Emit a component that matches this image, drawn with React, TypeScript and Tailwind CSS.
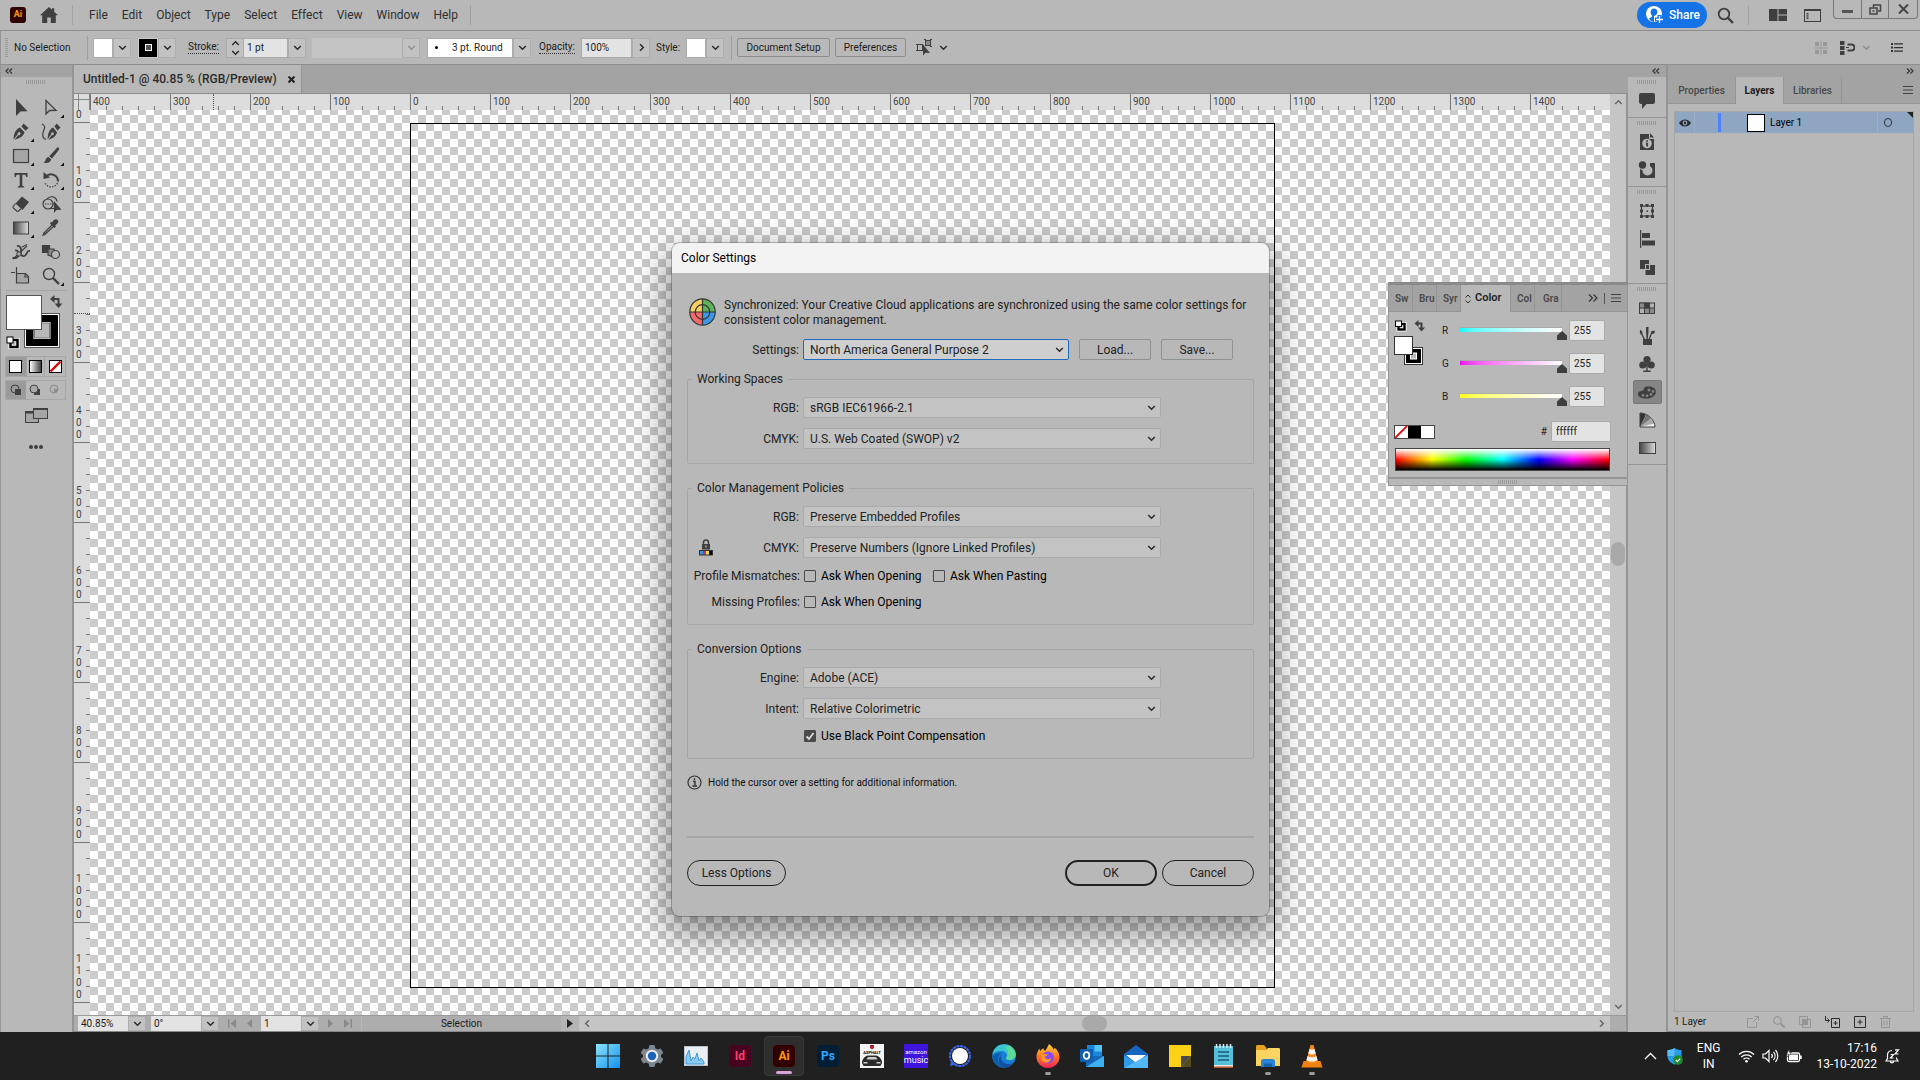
import React from "react";

type Kids = { children?: React.ReactNode };

const INK = "#3f3f3f";

function Chevron({ color = "#2b2b2b", turn = "" }: { color?: string; turn?: string }) {
  return (
    <svg width="9" height="9" viewBox="0 0 9 9" className={turn} aria-hidden="true">
      <path d="M1.2 3 4.5 6.3 7.8 3" fill="none" stroke={color} strokeWidth="1.5" />
    </svg>
  );
}

function Grip({ className = "" }: { className?: string }) {
  return (
    <div
      className={`h-1 w-5 bg-[repeating-linear-gradient(90deg,#999_0_1px,transparent_1px_2px)] ${className}`}
    />
  );
}

/* ---------- Menu bar ---------- */

const menus = ["File", "Edit", "Object", "Type", "Select", "Effect", "View", "Window", "Help"];

function MenuBar() {
  return (
    <header className="flex h-[31px] shrink-0 items-center border-b border-[#8d8d8d] pl-[10px]">
      <div className="flex h-4 w-4 items-center justify-center rounded-[3px] bg-[#330000] text-[9px] font-bold text-[#ff9a00]">
        Ai
      </div>
      <button aria-label="Home" className="ml-[14px]">
        <svg width="18" height="16" viewBox="0 0 18 16">
          <path d="M9 0 0 8.2h2.2V16h5v-5.5h3.6V16h5V8.2H18L14.2 4.7V1.3H12v1.4z" fill={INK} />
        </svg>
      </button>
      <div className="ml-[14px] h-5 w-px bg-[#a2a2a2]" />
      <nav className="ml-4 flex gap-[14px] text-[12px] text-[#2f2f2f]">
        {menus.map((m) => (
          <button key={m}>{m}</button>
        ))}
      </nav>
      <div className="ml-3 h-5 w-px bg-[#a2a2a2]" />
      <div className="ml-auto flex h-full items-center">
        <button className="flex h-[26px] w-[70px] items-center gap-1 rounded-full bg-[#1473e6] pl-2 text-[12px] font-medium text-white">
          <svg width="20" height="20" viewBox="0 0 20 20">
            <circle cx="9" cy="9" r="8" fill="#fff" />
            <path d="M9 3.6c-2.1 0-3.4 1.5-3.4 3.6 0 1.5.6 2.7 1.4 3.4v1.3c-1.3.5-2.7 1-3.2 1.9A7.6 7.6 0 0 0 9 17v-6c.8-.1 3.4-1.4 3.4-3.8S11.100 3.600 9 3.600z" fill="#1473e6" />
            <path d="M14.500 10v9M10 14.500h9" stroke="#1473e6" strokeWidth="4" />
            <path d="M14.500 11v7M11 14.500h7" stroke="#fff" strokeWidth="1.300" />
          </svg>
          Share
        </button>
        <button aria-label="Search" className="ml-[10px]">
          <svg width="17" height="17" viewBox="0 0 17 17" fill="none" stroke={INK}>
            <circle cx="7" cy="7" r="5.300" strokeWidth="1.800" />
            <path d="m11 11 5 5" strokeWidth="2.400" />
          </svg>
        </button>
        <div className="ml-[14px] h-5 w-px bg-[#a2a2a2]" />
        <button aria-label="Arrange documents" className="ml-5">
          <svg width="18" height="12" viewBox="0 0 18 12" fill={INK}>
            <path d="M0 0h8.500v12H0zM9.500 0H18v5.500H9.500zM9.500 6.500H18V12H9.500z" />
          </svg>
        </button>
        <button aria-label="Workspace" className="ml-[17px]">
          <svg width="17" height="13" viewBox="0 0 17 13" fill="none" stroke={INK}>
            <rect x=".5" y=".5" width="16" height="12" />
            <path d="M.5 1h16" strokeWidth="2" />
            <path d="M3.500 4v6" strokeWidth="2" strokeDasharray="1.500 .7" />
          </svg>
        </button>
        <div className="mr-[2px] ml-3 flex h-[19px] self-start rounded-b-[4px] border border-t-0 border-[#777]">
          <button aria-label="Minimize" className="flex w-7 items-center justify-center border-r border-[#777]">
            <span className="mt-[5px] h-[3px] w-[11px] bg-[#555]" />
          </button>
          <button aria-label="Restore" className="flex w-[27px] items-center justify-center border-r border-[#777]">
            <svg width="13" height="11" viewBox="0 0 13 11" fill="none" stroke="#444" strokeWidth="1.500">
              <path d="M4.500 3.500V1h7v6H9" />
              <rect x="1" y="4" width="7" height="6" />
              <path d="M3.500 7h2" />
            </svg>
          </button>
          <button aria-label="Close" className="flex w-7 items-center justify-center">
            <svg width="11" height="10" viewBox="0 0 11 10" stroke="#444" strokeWidth="2">
              <path d="m1 .5 9 9M10 .5l-9 9" />
            </svg>
          </button>
        </div>
      </div>
    </header>
  );
}

/* ---------- Control bar ---------- */

function DropButton({ label, dim = false, turn = "" }: { label: string; dim?: boolean; turn?: string }) {
  return (
    <button
      aria-label={label}
      className="flex h-full w-[18px] shrink-0 items-center justify-center border border-[#aeaeae] bg-[#c2c2c2]"
    >
      <Chevron color={dim ? "#8e8e8e" : "#2b2b2b"} turn={turn} />
    </button>
  );
}

function ControlBar() {
  return (
    <div className="flex h-[34px] shrink-0 items-center border-b border-[#8d8d8d] border-l border-l-[#949494] pl-1 text-[10px] text-[#1c1c1c]">
      <div className="h-5 w-[3px] bg-[repeating-linear-gradient(#999_0_1px,transparent_1px_2px)]" />
      <span className="ml-[6px] w-[73px]">No Selection</span>
      <div className="h-6 w-px bg-[#a0a0a0]" />
      <div className="ml-[5px] flex h-5">
        <button aria-label="Fill" className="w-5 border border-[#aaa] bg-white" />
        <DropButton label="Fill options" />
      </div>
      <div className="ml-[7px] flex h-5">
        <button aria-label="Stroke colour" className="flex w-5 items-center justify-center border border-[#ccc] bg-black">
          <span className="h-[7px] w-[7px] border border-white bg-[#555]" />
        </button>
        <DropButton label="Stroke colour options" />
      </div>
      <label htmlFor="stroke" className="ml-3 flex w-[38px]">
        <span className="border-b border-dotted border-[#333] leading-3">Stroke:</span>
      </label>
      <div className="flex h-5">
        <button aria-label="Step stroke weight" className="flex w-[18px] flex-col items-center justify-center border border-[#aaa] bg-[#c2c2c2]">
          <Chevron turn="rotate-180" />
          <Chevron />
        </button>
        <input id="stroke" defaultValue="1 pt" className="w-11 border border-l-0 border-[#aaa] bg-[#e3e3e3] px-[3px]" />
        <DropButton label="Stroke weights" />
      </div>
      <div className="ml-[6px] flex h-5">
        <div className="w-[90px] bg-[#c4c4c4]" />
        <DropButton label="Variable width profile" dim />
      </div>
      <div className="ml-[7px] flex h-5">
        <button className="flex w-[86px] items-center border border-[#aaa] bg-white pl-[7px] whitespace-nowrap">
          <span className="h-[3px] w-[3px] rounded-full bg-black" />
          <span className="ml-[14px]">3 pt. Round</span>
        </button>
        <DropButton label="Brush definition" />
      </div>
      <label htmlFor="opacity" className="ml-2 flex w-[42px]">
        <span className="border-b border-dotted border-[#333] leading-3">Opacity:</span>
      </label>
      <div className="flex h-5">
        <input id="opacity" defaultValue="100%" className="w-[51px] border border-[#aaa] bg-[#e3e3e3] px-[3px]" />
        <DropButton label="Opacity slider" turn="-rotate-90" />
      </div>
      <span className="ml-[6px] w-[30px]">Style:</span>
      <div className="flex h-5">
        <button aria-label="Graphic style" className="w-5 border border-[#aaa] bg-white" />
        <DropButton label="Graphic styles" />
      </div>
      <div className="ml-[7px] h-6 w-px bg-[#a0a0a0]" />
      <button className="ml-[5px] h-[19px] w-[93px] rounded-[2px] border border-[#8d8d8d]">Document Setup</button>
      <button className="ml-[5px] h-[19px] w-[71px] rounded-[2px] border border-[#8d8d8d]">Preferences</button>
      <button aria-label="Select similar objects" className="ml-[10px] flex items-center gap-[6px]">
        <svg width="17" height="17" viewBox="0 0 17 17" fill="none" stroke={INK}>
          <rect x="1.500" y="5.500" width="5" height="6" />
          <rect x="9.500" y="1.500" width="5" height="5" fill="#8a8a8a" />
          <path d="M0 5.500h2M0 11.500h2M8 .5h2M14 .5h2M14 7.500h2" />
          <path d="M7 5.500v11l2.500-2.700 4.500.2z" fill={INK} stroke="none" />
        </svg>
        <Chevron />
      </button>
      <div className="mr-[17px] ml-auto flex items-center">
        <svg width="14" height="14" viewBox="0 0 14 14" fill="#999">
          <path d="M1 1h4v4H1zM9 1h4v4H9zM1 9h4v4H1zM9 9h4v4H9z" />
          <path d="M6.500 0h1v14h-1zM0 6.500h14v1H0z" />
        </svg>
        <svg width="15" height="14" viewBox="0 0 15 14" className="ml-3">
          <path d="M0 0h4.500v4H0zM0 5h4.500v4H0zM0 10h4.500v4H0z" fill={INK} />
          <path d="M7.500 3.500h4a2.700 2.700 0 0 1 0 6h-4" fill="none" stroke={INK} strokeWidth="2" />
          <path d="M6 6.500h3" stroke={INK} />
        </svg>
        <span className="ml-[7px] flex">
          <Chevron color="#8e8e8e" />
        </span>
        <button aria-label="Control menu" className="ml-5">
          <svg width="12" height="9" viewBox="0 0 12 9" fill="#333">
            <path d="M0 0h2v2H0zM0 3.500h2v2H0zM0 7h2v2H0zM3 .3h9v1.300H3zM3 3.900h9v1.300H3zM3 7.400h9v1.300H3z" />
          </svg>
        </button>
      </div>
    </div>
  );
}

/* ---------- Tools panel ---------- */

const tools: { name: string; more?: boolean; art: React.ReactNode }[] = [
  { name: "Selection", art: <path d="M5 1v17l4.500-4.500 7-.3z" fill={INK} /> },
  { name: "Direct selection", more: true, art: <path d="M5 2.500v13.500l3.500-3.500 6.500-.2z" fill="none" stroke={INK} strokeWidth="1.300" /> },
  {
    name: "Pen",
    more: true,
    art: (
      <g fill={INK}>
        <path d="M2.500 17.500C3 12 4 7.500 9 5.500l4.500 4.700C12 15 8 16.500 3.500 17.500l4-4.500a1.500 1.500 0 1 0-.8-.7z" />
        <path d="m10.500 4.500 2-3 5 4.500-3 2.700z" />
      </g>
    ),
  },
  {
    name: "Curvature",
    art: (
      <g>
        <path d="M6.500 17.500C7 12 8 7.500 12 5.500l4 4.700C15 14.500 11.500 16.500 7.500 17.500l3.500-4.500a1.400 1.400 0 1 0-.8-.7z" fill={INK} />
        <path d="m13.500 4.500 2-3 4 4-3 3z" fill={INK} />
        <path d="M1 2c4 2 2.500 4 1.500 7S.5 16 5 17.500" fill="none" stroke={INK} strokeWidth="1.200" />
      </g>
    ),
  },
  { name: "Rectangle", more: true, art: <rect x="2.500" y="3.500" width="15" height="13" fill="#a5a5a5" stroke={INK} strokeWidth="1.200" /> },
  {
    name: "Paintbrush",
    more: true,
    art: (
      <g fill={INK}>
        <path d="M17.500 1.500c1.300.8.6 2-.5 3.500l-6 7.500-2.800-2.300 6.500-7c1.100-1.200 1.900-2.200 2.800-1.700z" />
        <path d="M7.500 11l2.700 2.300c-.5 3-3.500 4.500-7.700 3.500 2.500-1 1.500-5 5-5.800z" />
      </g>
    ),
  },
  { name: "Type", more: true, art: <path d="M3.500 3h13v4h-1.300c-.2-1.700-.7-2.300-2.400-2.300h-1.500v10.500c0 .9.400 1 1.900 1.200V17.500H6.800v-1.100c1.500-.2 1.900-.3 1.900-1.200V4.700H7.200C5.500 4.700 5 5.300 4.800 7H3.500z" fill={INK} /> },
  {
    name: "Rotate",
    more: true,
    art: (
      <g fill="none" stroke={INK}>
        <path d="M5 6.500a7 7 0 0 1 12 5" strokeWidth="2" />
        <path d="M16.500 13a7 7 0 0 1-12.500 0" strokeWidth="1.300" strokeDasharray="1.500 1.200" />
        <path d="M2.500 2v7l6.500-1.500z" fill={INK} stroke="none" />
      </g>
    ),
  },
  {
    name: "Eraser",
    more: true,
    art: (
      <g>
        <path d="M11 2.500 18 8l-6.500 8-7-6.500z" fill={INK} />
        <path d="m4.500 9.500-2.300 3c-.4.6-.3 1 .1 1.400L6 17.200c.5.4 1 .3 1.400 0l2.600-2.600" fill="none" stroke={INK} strokeWidth="1.200" />
      </g>
    ),
  },
  {
    name: "Shape builder",
    art: (
      <g fill="none" stroke={INK} strokeWidth="1.200">
        <circle cx="7" cy="10" r="5" />
        <path d="M6 5.200A5.500 5.500 0 0 1 16 7.500M8 14.500h5" />
        <path d="M4 10h9" strokeDasharray="1.500 1" />
        <path d="M13 7v12l2.500-3 5-.3z" fill={INK} stroke="none" />
      </g>
    ),
  },
  { name: "Gradient", more: true, art: <rect x="2.500" y="4" width="15" height="12" fill="url(#darkToLight)" stroke={INK} /> },
  {
    name: "Eyedropper",
    art: (
      <g>
        <path d="M11 4.500c2-3.500 4-4 5.500-2.700 1.500 1.400 1 3.400-2.300 5.700l.8 1-1.500 1.500L9 5.500 10 4z" fill={INK} />
        <path d="m11 7-7.500 7.500c-.9.900-.8 1.700-1.300 2.500.8-.3 1.500-.3 2.400-1.200L12.500 8.500" fill="none" stroke={INK} strokeWidth="1.300" />
      </g>
    ),
  },
  {
    name: "Puppet warp",
    art: (
      <g fill="none" stroke={INK}>
        <path d="M1.500 15.500c3 1.500 6 0 6-3.500S5.500 8 4 8.500M6 4c3.500-.5 4.500 3 4 6.500s3 5 5 2 1-4 4-3.500" strokeWidth="1.800" />
        <path d="M2 17 16 4M11 5l5-2.500" strokeWidth="1.200" />
        <circle cx="8" cy="12" r="2.200" fill="#a5a5a5" />
      </g>
    ),
  },
  {
    name: "Blend",
    art: (
      <g stroke={INK} strokeWidth="1.200">
        <path d="M1.500 3.500h7v7h-7z" fill={INK} />
        <path d="M7 7h6l1 5-3 2.500-4-1.500z" fill="#888" />
        <circle cx="14.500" cy="12.500" r="4" fill="#b8b8b8" />
      </g>
    ),
  },
  {
    name: "Artboard",
    art: (
      <g stroke={INK} strokeWidth="1.200">
        <path d="M5.500 7.500h9l3 3v6.500h-12z" fill="#a5a5a5" />
        <path d="M5.500 1v6M0 6.500h4M14 7.500v3.500h3.500" fill="none" />
      </g>
    ),
  },
  {
    name: "Zoom",
    more: true,
    art: (
      <g fill="none" stroke={INK}>
        <circle cx="8" cy="8" r="5.500" strokeWidth="1.400" />
        <path d="m12 12 6 6" strokeWidth="2.400" />
      </g>
    ),
  },
];

function ToolsPanel() {
  return (
    <aside className="flex w-[74px] shrink-0 flex-col border-r-2 border-l border-[#949494]">
      <div className="flex h-3 items-center bg-[#a3a3a3] pl-1">
        <svg width="8" height="6" viewBox="0 0 8 6" fill="none" stroke="#333" strokeWidth="1.200">
          <path d="M3.500.5 1 3l2.500 2.500M7 .5 4.500 3 7 5.500" />
        </svg>
      </div>
      <Grip className="mt-[3px] ml-[25px]" />
      <div className="mt-3 ml-[5px] grid w-[60px] grid-cols-2">
        {tools.map((t) => (
          <button key={t.name} aria-label={t.name} className="flex h-6 items-center pl-[5px]">
            <svg width="24" height="22" viewBox="0 -1 24 22">
              <defs>
                <linearGradient id="darkToLight">
                  <stop offset="0" stopColor="#444" />
                  <stop offset="1" stopColor="#dedede" />
                </linearGradient>
              </defs>
              {t.art}
              {t.more && <path d="M23 16.500V20h-3.500z" fill="#111" />}
            </svg>
          </button>
        ))}
      </div>
      <div className="mx-[5px] mt-[2px] h-px bg-[#a4a4a4]" />
      <svg width="62" height="56" viewBox="0 0 62 56" className="mt-[3px] ml-[5px]" aria-label="Fill and stroke">
        <rect x="18.500" y="19.500" width="35" height="34" fill="#fff" stroke="#555" />
        <path fillRule="evenodd" d="M20 21h32v31H20zM27.500 28v17h17V28z" fill="#000" />
        <rect x="28.500" y="29" width="15" height="15" fill="#b8b8b8" stroke="#777" />
        <rect x=".5" y="1.500" width="35" height="34" fill="#fff" stroke="#555" />
        <path d="M46 5h6.500v7" fill="none" stroke={INK} strokeWidth="2" />
        <path d="m44 5 4.500-4v8zM52.500 14l-3.800-4.500h7.600z" fill={INK} />
        <rect x="4.500" y="46" width="7" height="7" fill="none" stroke="#fff" strokeWidth="4" />
        <rect x="4.500" y="46" width="7" height="7" fill="none" stroke="#000" strokeWidth="2.500" />
        <rect x="1" y="43" width="6" height="6" fill="#fff" stroke="#000" />
      </svg>
      <div className="mt-[6px] ml-1 grid w-[61px] grid-cols-3 border border-[#a6a6a6]">
        <button aria-label="Color" className="flex h-[19px] items-center justify-center bg-[#9b9b9b]">
          <span className="h-[13px] w-[13px] border border-black bg-white" />
        </button>
        <button aria-label="Gradient fill" className="flex h-[19px] items-center justify-center border-x border-[#a6a6a6]">
          <span className="h-[13px] w-[13px] border border-black bg-linear-to-r from-white to-[#444]" />
        </button>
        <button aria-label="None" className="flex h-[19px] items-center justify-center">
          <svg width="13" height="13" viewBox="0 0 13 13">
            <rect x=".5" y=".5" width="12" height="12" fill="#fff" stroke="#000" />
            <path d="M1.500 11.500l10-10" stroke="#e00000" strokeWidth="2.400" />
          </svg>
        </button>
      </div>
      <div className="mt-[3px] ml-1 grid w-[61px] grid-cols-3 border border-[#a6a6a6]">
        {["Draw normal", "Draw behind", "Draw inside"].map((n, i) => (
          <button
            key={n}
            aria-label={n}
            className={`flex h-[18px] items-center justify-center ${i === 0 ? "bg-[#9b9b9b]" : ""} ${i === 2 ? "opacity-35" : ""}`}
          >
            <svg width="12" height="12" viewBox="0 0 12 12">
              {i === 1 && <path d="M5 5h6v6H5z" fill={INK} />}
              <circle cx="5" cy="5" r="4" fill={i === 0 ? "none" : "#aaa"} stroke={INK} />
              {i === 0 && <path d="M5 5h6v6H5z" fill={INK} />}
              {i === 2 && <path d="M5 5h4a4 4 0 0 1-4 4z" fill={INK} />}
            </svg>
          </button>
        ))}
      </div>
      <button aria-label="Screen mode" className="mt-[7px] ml-6 self-start">
        <svg width="23" height="17" viewBox="0 0 23 17" stroke={INK}>
          <rect x=".5" y="4.500" width="13" height="11" fill="#a5a5a5" />
          <rect x="8.500" y="1.500" width="14" height="10" fill="#a5a5a5" />
          <path d="M.5 5.500H8M8.500 2h14" strokeWidth="2" />
        </svg>
      </button>
      <button aria-label="Edit toolbar" className="mt-[21px] ml-7 flex gap-px self-start">
        <i className="h-1 w-1 rounded-full bg-[#3f3f3f]" />
        <i className="h-1 w-1 rounded-full bg-[#3f3f3f]" />
        <i className="h-1 w-1 rounded-full bg-[#3f3f3f]" />
      </button>
    </aside>
  );
}

/* ---------- Document window ---------- */

const hLabels = [400, 300, 200, 100, 0, 100, 200, 300, 400, 500, 600, 700, 800, 900, 1000, 1100, 1200, 1300, 1400];
const vLabels = ["0", "100", "200", "300", "400", "500", "600", "700", "800", "900", "1000", "1100"];

function StatusBar() {
  return (
    <div className="flex h-[17px] shrink-0 border-t border-b border-t-[#9a9a9a] border-b-[#888] bg-[#adadad] pl-1 text-[10px] text-[#1c1c1c]">
      <input aria-label="Zoom level" defaultValue="40.85%" className="w-[50px] bg-[#e3e3e3] px-[3px]" />
      <DropButton label="Zoom levels" />
      <input aria-label="Rotation" defaultValue="0°" className="ml-[5px] w-[50px] bg-[#e3e3e3] px-[3px]" />
      <DropButton label="Rotation angles" />
      <div className="flex w-[42px] items-center justify-center gap-[11px]">
        <svg width="8" height="9" viewBox="0 0 8 9" fill="#8a8a8a"><path d="M0 0h1.500v9H0zM8 0v9L2.500 4.500z" /></svg>
        <svg width="5" height="9" viewBox="0 0 5 9" fill="#8a8a8a"><path d="M5 0v9L0 4.500z" /></svg>
      </div>
      <input aria-label="Artboard number" defaultValue="1" className="w-10 bg-[#e3e3e3] px-[3px]" />
      <DropButton label="Artboards" />
      <div className="flex w-[43px] items-center justify-center gap-[11px] border-r border-[#b8b8b8]">
        <svg width="5" height="9" viewBox="0 0 5 9" fill="#8a8a8a"><path d="M0 0v9l5-4.500z" /></svg>
        <svg width="8" height="9" viewBox="0 0 8 9" fill="#8a8a8a"><path d="M6.500 0H8v9H6.500zM0 0v9l5.500-4.500z" /></svg>
      </div>
      <div className="flex w-[199px] items-center justify-center">Selection</div>
      <button aria-label="Status display" className="flex w-[18px] items-center justify-center bg-[#b5b5b5]">
        <svg width="6" height="9" viewBox="0 0 6 9" fill="#222"><path d="M0 0v9l6-4.500z" /></svg>
      </button>
      <div className="flex flex-1 items-center bg-[#c5c5c5] px-1">
        <Chevron color="#666" turn="rotate-90" />
        <div className="ml-[490px] h-[15px] w-[25px] rounded-[7px] bg-[#a9a9a9]" />
        <span className="ml-auto flex">
          <Chevron color="#666" turn="-rotate-90" />
        </span>
      </div>
      <div className="w-[18px] border-r-2 border-[#949494]" />
    </div>
  );
}

function DocumentWindow() {
  return (
    <main className="flex min-w-0 flex-1 flex-col">
      <div className="flex h-[29px] shrink-0 border-b border-[#8d8d8d] bg-[#a3a3a3]">
        <div className="flex w-[228px] items-center justify-between border-r border-[#949494] bg-[#b8b8b8] pr-[6px] pl-[9px] text-[12px] font-medium whitespace-nowrap text-[#2b2b2b]">
          Untitled-1 @ 40.85 % (RGB/Preview)
          <button aria-label="Close document">
            <svg width="7" height="7" viewBox="0 0 7 7" stroke="#222" strokeWidth="2"><path d="m.5.500 6 6M6.500.5l-6 6" /></svg>
          </button>
        </div>
      </div>
      <div className="flex min-h-0 flex-1">
        <div className="relative flex w-4 shrink-0 flex-col bg-[#dcdcdc] text-[10px] leading-3 text-[#444]">
          <svg width="16" height="16" viewBox="0 0 16 16" stroke="#888" className="shrink-0">
            <path d="M0 5.500h16M4.500 0v16M15.500 0v16" />
          </svg>
          <div className="flex min-h-0 flex-1 flex-col overflow-hidden bg-[repeating-linear-gradient(transparent_0_12px,#777_12px_13px,transparent_13px_16px)] bg-[length:4px_100%] bg-right bg-no-repeat">
            {vLabels.map((v, i) => (
              <div
                key={v}
                className={`flex shrink-0 flex-col justify-end border-b border-[#777] pb-px pl-[2px] ${i === 0 ? "h-[13px]" : "h-20"}`}
              >
                {v.split("").map((c, k) => (
                  <span key={k}>{c}</span>
                ))}
              </div>
            ))}
          </div>
          <div className="absolute top-[219px] left-0 w-4 border-t border-dotted border-[#555]" />
        </div>
        <div className="flex min-w-0 flex-1 flex-col">
          <div className="relative flex h-4 shrink-0 overflow-hidden bg-[#dcdcdc] bg-[repeating-linear-gradient(90deg,#777_0_1px,transparent_1px_16px)] bg-[length:100%_4px] bg-bottom bg-no-repeat text-[10px] leading-4 text-[#444]">
            {hLabels.map((l, i) => (
              <span key={i} className="w-20 shrink-0 border-l border-[#777] pl-[2px]">
                {l}
              </span>
            ))}
            <div className="absolute top-0 left-[123px] h-4 border-l border-dotted border-[#555]" />
          </div>
          <div className="relative flex-1 overflow-hidden bg-[conic-gradient(#cbcbcb_25%,#fff_0_50%,#cbcbcb_0_75%,#fff_0)] bg-[length:16px_16px] bg-[position:0_5px]">
            <div className="absolute top-[13px] left-[320px] h-[865px] w-[865px] border border-black" />
            <ColorSettings />
          </div>
        </div>
        <div className="flex w-[18px] shrink-0 flex-col items-center border-r-2 border-[#949494] bg-[#c5c5c5] py-1">
          <Chevron color="#666" turn="rotate-180" />
          <div className="mt-[435px] h-6 w-[14px] rounded-[7px] bg-[#a9a9a9]" />
          <span className="mt-auto flex">
            <Chevron color="#666" />
          </span>
        </div>
      </div>
      <StatusBar />
    </main>
  );
}

/* ---------- Color Settings dialog ---------- */

function Select({ id, value, wide = true, focus = false }: { id: string; value: string; wide?: boolean; focus?: boolean }) {
  return (
    <div className={`relative ${wide ? "w-[358px]" : "w-[266px]"}`}>
      <select
        id={id}
        className={`block h-[21px] w-full appearance-none rounded-[2px] border px-[6px] text-[12px] leading-[18px] text-[#222] ${
          focus ? "border-[#1f6cbf] bg-[#cfcfcf]" : "border-[#aaa] bg-[#c3c3c3]"
        }`}
      >
        <option>{value}</option>
      </select>
      <div className="pointer-events-none absolute top-[6px] right-[5px]">
        <Chevron />
      </div>
    </div>
  );
}

function Row({ id, label, value, icon }: { id: string; label: string; value: string; icon?: React.ReactNode }) {
  return (
    <div className="flex items-center gap-1">
      <div className="flex w-[111px] items-center justify-between pl-[11px]">
        <span>{icon}</span>
        <label htmlFor={id}>{label}</label>
      </div>
      <Select id={id} value={value} />
    </div>
  );
}

function Check({ id, label, checked = false }: { id: string; label: string; checked?: boolean }) {
  return (
    <span className="flex items-center gap-[5px] whitespace-nowrap text-black">
      <span className="relative flex">
        <input
          id={id}
          type="checkbox"
          defaultChecked={checked}
          className="h-3 w-3 appearance-none rounded-[1px] border border-[#4a4a4a] checked:bg-[#4a4a4a]"
        />
        {checked && (
          <svg width="12" height="12" viewBox="0 0 12 12" className="pointer-events-none absolute inset-0">
            <path d="m2.500 6.500 2.500 2.500 4.500-6" fill="none" stroke="#ddd" strokeWidth="1.800" />
          </svg>
        )}
      </span>
      <label htmlFor={id}>{label}</label>
    </span>
  );
}

function Group({ title, children, className = "" }: Kids & { title: string; className?: string }) {
  return (
    <fieldset className={`rounded-[2px] border border-[#a6a6a6] ${className}`}>
      <legend className="ml-1 px-[5px] leading-4">{title}</legend>
      <div className="flex flex-col pt-[10px]">{children}</div>
    </fieldset>
  );
}

const lockIcon = (
  <svg width="14" height="17" viewBox="0 0 14 17" className="block">
    <path d="M4.500 5V3.500a2.500 2.500 0 0 1 5 0V5" fill="none" stroke={INK} strokeWidth="1.500" />
    <rect x="3" y="5" width="8" height="5.500" fill={INK} />
    <path d="M6.500 6.500h1v2h-1z" fill="#ddd" />
    <rect y="11" width="14" height="5.500" fill="#333" />
    <path d="M1 12h3v3.500H1z" fill="#3a8fd0" />
    <path d="M4 12h3v3.500H4z" fill="#c0308a" />
    <path d="M7 12h3v3.500H7z" fill="#f0e040" />
    <path d="M10 12h3v3.500h-3z" fill="#000" />
  </svg>
);

function ColorSettings() {
  return (
    <section
      role="dialog"
      aria-label="Color Settings"
      className="absolute top-[133px] left-[582px] w-[597px] overflow-hidden rounded-lg bg-[#b8b8b8] text-[12px] text-[#222] shadow-[0_14px_36px_6px_rgba(0,0,0,0.4),0_0_0_1px_rgba(110,110,110,0.45)]"
    >
      <h1 className="h-[30px] bg-[#f3f3f3] pl-[9px] leading-[30px] text-black">Color Settings</h1>
      <div className="flex flex-col px-[15px] pt-[25px] pb-[30px]">
        <div className="flex gap-2 pl-[2px] leading-[15px]">
          <svg width="27" height="28" viewBox="0 0 27 28" className="shrink-0">
            <path d="M13.500 14V1A12.500 13 0 0 0 1 14z" fill="#f5d060" />
            <path d="M13.500 14V1A12.500 13 0 0 1 26 14z" fill="#5fb45a" />
            <path d="M13.500 14v13A12.500 13 0 0 1 1 14z" fill="#f06a6e" />
            <path d="M13.500 14v13A12.500 13 0 0 0 26 14z" fill="#3d97e8" />
            <g fill="none" stroke="#333" strokeWidth="1.200">
              <ellipse cx="13.500" cy="14" rx="12.700" ry="13.200" />
              <circle cx="13.500" cy="14" r="7.300" />
              <path d="M13.500 1v26M1 14h25" />
            </g>
          </svg>
          <p>
            Synchronized: Your Creative Cloud applications are synchronized using the same color settings for
            consistent color management.
          </p>
        </div>
        <div className="mt-[11px] flex items-center gap-1">
          <label htmlFor="settings" className="w-28 text-right">
            Settings:
          </label>
          <Select id="settings" value="North America General Purpose 2" wide={false} focus />
          <button className="ml-[6px] h-[21px] w-[72px] rounded-[2px] border border-[#919191]">Load...</button>
          <button className="ml-[6px] h-[21px] w-[72px] rounded-[2px] border border-[#919191]">Save...</button>
        </div>
        <Group title="Working Spaces" className="mt-[11px] pb-[14px]">
          <Row id="ws-rgb" label="RGB:" value="sRGB IEC61966-2.1" />
          <div className="mt-[10px]">
            <Row id="ws-cmyk" label="CMYK:" value="U.S. Web Coated (SWOP) v2" />
          </div>
        </Group>
        <Group title="Color Management Policies" className="mt-4 pb-[13px]">
          <Row id="cm-rgb" label="RGB:" value="Preserve Embedded Profiles" />
          <div className="mt-[10px]">
            <Row id="cm-cmyk" label="CMYK:" value="Preserve Numbers (Ignore Linked Profiles)" icon={lockIcon} />
          </div>
          <div className="mt-[9px] flex h-[18px] items-center gap-1">
            <span className="w-28 text-right">Profile Mismatches:</span>
            <span className="w-[125px]">
              <Check id="mm-open" label="Ask When Opening" />
            </span>
            <Check id="mm-paste" label="Ask When Pasting" />
          </div>
          <div className="mt-2 flex h-[18px] items-center gap-1">
            <span className="w-28 text-right">Missing Profiles:</span>
            <Check id="mp-open" label="Ask When Opening" />
          </div>
        </Group>
        <Group title="Conversion Options" className="mt-4 pb-[13px]">
          <Row id="engine" label="Engine:" value="Adobe (ACE)" />
          <div className="mt-[10px]">
            <Row id="intent" label="Intent:" value="Relative Colorimetric" />
          </div>
          <div className="mt-2 flex h-[18px] items-center pl-[116px]">
            <Check id="bpc" label="Use Black Point Compensation" checked />
          </div>
        </Group>
        <div className="mt-4 flex h-[14px] items-center gap-[6px] text-[10px] text-[#111]">
          <svg width="15" height="15" viewBox="0 0 15 15" fill="none" stroke="#333">
            <circle cx="7.500" cy="7.500" r="6.500" strokeWidth="1.200" />
            <path d="M6 6.500h2v4.500M5.500 11h4.500M7.500 3.300v1.700" strokeWidth="1.400" />
          </svg>
          Hold the cursor over a setting for additional information.
        </div>
        <div className="mt-[47px] h-[2px] bg-[#a6a6a6]" />
        <div className="mt-[22px] flex">
          <button className="h-[26px] w-[99px] rounded-full border border-[#222]">Less Options</button>
          <button className="mr-[5px] ml-auto h-[26px] w-[92px] rounded-full border-2 border-[#222]">OK</button>
          <button className="h-[26px] w-[92px] rounded-full border border-[#222]">Cancel</button>
        </div>
      </div>
    </section>
  );
}

/* ---------- Floating Color panel ---------- */

function CutTab({ children }: Kids) {
  return (
    <button className="w-6 overflow-hidden border-r border-[#949494] pl-[6px] text-left whitespace-nowrap text-[#4a4a4a]">
      {children}
    </button>
  );
}

const channels = [
  { id: "R", track: "bg-linear-to-r from-[#00ffff] to-white" },
  { id: "G", track: "bg-linear-to-r from-[#ee00ee] to-white" },
  { id: "B", track: "bg-linear-to-r from-[#ffff00] to-white" },
];

function ColorPanel() {
  return (
    <section
      aria-label="Color"
      className="absolute top-[217px] right-[292px] w-[240px] border border-[#949494] border-t-[3px] border-t-[#8a8a8a] bg-[#b8b8b8] text-[10px] text-[#222]"
    >
      <div className="flex h-[27px] border-b border-[#949494] bg-[#a3a3a3] font-semibold">
        <CutTab>Sw</CutTab>
        <CutTab>Bru</CutTab>
        <CutTab>Syr</CutTab>
        <button className="-mb-px flex w-[50px] items-center gap-1 border-r border-[#949494] bg-[#b8b8b8] pl-1 text-[11px]">
          <svg width="6" height="10" viewBox="0 0 6 10" fill="none" stroke="#333"><path d="M.5 3.500 3 1l2.500 2.500M.5 6.500 3 9l2.500-2.500" /></svg>
          Color
        </button>
        <CutTab>Col</CutTab>
        <button className="w-[27px] overflow-hidden border-r border-[#949494] pl-2 text-left whitespace-nowrap text-[#4a4a4a]">Gra</button>
        <div className="ml-auto flex items-center gap-[6px] pr-[6px]">
          <svg width="10" height="8" viewBox="0 0 10 8" fill="none" stroke="#333" strokeWidth="1.200"><path d="m1 .5 3.500 3.500L1 7.500M5.500.5 9 4 5.500 7.500" /></svg>
          <i className="h-[11px] w-px bg-[#555]" />
          <svg width="10" height="8" viewBox="0 0 10 8" stroke="#444"><path d="M0 .5h10M0 4h10M0 7.500h10" /></svg>
        </div>
      </div>
      <div className="flex pt-2 pl-[5px]">
        <svg width="32" height="50" viewBox="0 0 32 50">
          <rect x="4.500" y="4" width="6" height="5.500" fill="none" stroke="#fff" strokeWidth="4" />
          <rect x="4.500" y="4" width="6" height="5.500" fill="none" stroke="#000" strokeWidth="2.400" />
          <rect x="1.500" y="1" width="6" height="5.500" fill="#fff" stroke="#000" />
          <path d="M24 3.500h3.500V8" fill="none" stroke={INK} strokeWidth="2" />
          <path d="m20.500 3.500 4-3.500v7zM27.500 11.500l-3.500-4h7z" fill={INK} />
          <rect x="10.500" y="27.500" width="18" height="17" fill="#fff" stroke="#333" />
          <path fillRule="evenodd" d="M12 29h15v14H12zM16 33v6h7v-6z" fill="#000" />
          <rect x="16.500" y="33" width="6" height="6" fill="#b8b8b8" stroke="#fff" />
          <rect x=".5" y="16.500" width="18" height="18" fill="#fff" stroke="#333" />
        </svg>
        <div className="ml-4 flex flex-col gap-3">
          {channels.map((c) => (
            <div key={c.id} className="flex h-[21px] items-center">
              <label htmlFor={`ch-${c.id}`} className="w-[18px]">
                {c.id}
              </label>
              <div className="relative h-[21px] w-[102px] pt-[7px]">
                <div className={`h-[5px] border-t border-[#aaa] ${c.track}`} />
                <svg width="10" height="9" viewBox="0 0 10 9" className="absolute top-[11px] -right-[5px]">
                  <path d="M0 9V4.500L5 0l5 4.500V9z" fill={INK} />
                </svg>
              </div>
              <input
                id={`ch-${c.id}`}
                defaultValue="255"
                className="ml-[7px] h-[21px] w-9 rounded-[2px] border border-[#aaa] bg-[#e3e3e3] px-1"
              />
            </div>
          ))}
        </div>
      </div>
      <div className="mt-[14px] flex items-center pl-[5px]">
        <svg width="41" height="14" viewBox="0 0 41 14">
          <rect x=".5" y=".5" width="40" height="13" fill="#fff" stroke="#444" />
          <path d="M1 13 13 1" stroke="#e01010" strokeWidth="1.800" />
          <path d="M14 1h13v12H14z" />
        </svg>
        <label htmlFor="hex" className="ml-auto">
          #
        </label>
        <input id="hex" defaultValue="ffffff" className="mr-4 ml-1 h-[21px] w-[60px] rounded-[2px] border border-[#aaa] bg-[#e3e3e3] px-1" />
      </div>
      <div className="mt-[6px] mr-[17px] ml-[6px] h-[23px] border border-[#444] bg-[linear-gradient(#fff,transparent_50%,#000),linear-gradient(90deg,#f00,#ff0_17%,#0f0_33%,#0ff_50%,#00f_67%,#f0f_83%,#f00)]" />
      <div className="mt-[6px] flex h-2 items-center justify-center border-t-2 border-[#949494]">
        <Grip />
      </div>
    </section>
  );
}

/* ---------- Icon dock ---------- */

const dock: { name: string; art: React.ReactNode }[][] = [
  [{ name: "Comments", art: <path d="M3 1h12a2 2 0 0 1 2 2v7a2 2 0 0 1-2 2H8.500L4 17v-5H3a2 2 0 0 1-2-2V3a2 2 0 0 1 2-2z" fill={INK} /> }],
  [
    {
      name: "Document info",
      art: (
        <g>
          <path d="M2 1h9v5h5v11H2zM12 0v4.500h4z" fill={INK} />
          <circle cx="9" cy="10.500" r="4.800" fill="#b8b8b8" />
          <path d="M8.300 7.200h1.700v1.500H8.300zM7.800 9.800H10v3.700H8.500" fill={INK} />
        </g>
      ),
    },
    {
      name: "Asset export",
      art: (
        <g>
          <path d="M2 2h15v15H2z" fill={INK} />
          <circle cx="9.500" cy="9.500" r="5" fill="#b8b8b8" />
          <path d="M8 0h4v6H8z" fill="#b8b8b8" />
          <circle cx="5" cy="4.500" r="4.500" fill="#b8b8b8" />
          <circle cx="4.500" cy="4" r="3.700" fill={INK} />
        </g>
      ),
    },
  ],
  [
    {
      name: "Transform",
      art: (
        <g fill={INK}>
          <rect x="3.500" y="4" width="11" height="10" fill="none" stroke={INK} strokeWidth="1.200" />
          <path d="M2 2h3v3H2zM7.500 2h3v3h-3zM13 2h3v3h-3zM2 7.500h3v3H2zM13 7.500h3v3h-3zM2 13h3v3H2zM7.500 13h3v3h-3zM13 13h3v3h-3zM8.500 8.500h1.500V10H8.500z" />
        </g>
      ),
    },
    { name: "Align", art: <path d="M2 0h1.200v18H2zM4 3h8v5H4zM4 10.500h13v5H4z" fill={INK} /> },
    {
      name: "Pathfinder",
      art: (
        <g fill={INK}>
          <path d="M2 2h9v4H7v5H2zM12 7h5v10H7.500v-5H12z" />
          <path d="M8 7h3v4H8z" />
        </g>
      ),
    },
  ],
  [
    {
      name: "Swatches",
      art: (
        <g stroke={INK}>
          <rect x="1.500" y="4" width="15" height="10.500" fill="#b0b0b0" />
          <path d="M1.500 4h5v5h-5zM6.500 9h5v5.500h-5zM11.500 9h5v5.500h-5z" fill="#8a8a8a" />
          <path d="M6.500 4h5v5h-5z" fill={INK} />
        </g>
      ),
    },
    {
      name: "Brushes",
      art: (
        <g fill={INK}>
          <path d="M5 12h9v6H5zM8 0h2.500v5L9.800 12H8.500L8 5zM2 3c2 0 2.500 2 2.500 4L7 12H5.500L3.500 8C2 7 1.500 5 2 3zM17 4c0 2-1 3-3 3l-2 5h-1.500l2.500-6c-.5-2 1.500-2.500 4-2z" />
        </g>
      ),
    },
    {
      name: "Symbols",
      art: (
        <g fill={INK}>
          <circle cx="9" cy="4.500" r="3.600" />
          <circle cx="4.800" cy="10" r="3.600" />
          <circle cx="13.200" cy="10" r="3.600" />
          <path d="M8.300 5h1.400v10.500h3V17H5.300v-1.500h3zM7 8h4v3H7z" />
        </g>
      ),
    },
    {
      name: "Color",
      art: (
        <g>
          <path d="M12 3.500c4.500.5 6.500 3.500 5.700 6.500-1 3.500-5 5.500-9.200 5.500-4.500 0-8.500-1.500-8.500-4.500C0 7.500 4.500 8.500 5.500 7S5 3 12 3.500z" fill={INK} />
          <g fill="#858585">
            <circle cx="11" cy="7" r="1.500" />
            <circle cx="15" cy="8.500" r="1.400" />
            <circle cx="13" cy="11.500" r="1.400" />
            <circle cx="9" cy="12.800" r="1.400" />
            <circle cx="5" cy="12.300" r="1.400" />
          </g>
        </g>
      ),
    },
    {
      name: "Color guide",
      art: (
        <g>
          <path d="M2 16V2C9.500 2 17 9 17 16z" fill="#eee" />
          <path d="M2 16V2c2 0 4 .6 6 1.800z" fill="#333" />
          <path d="m2 16 6-12.200c2 1 3.600 2.200 5 4z" fill="#777" />
          <path d="M2 16 13 7.800C14.500 9.500 15.500 11 16 12.500z" fill="#aaa" />
          <path d="M2 16V2C9.500 2 17 9 17 16z" fill="none" stroke={INK} />
        </g>
      ),
    },
    { name: "Gradient", art: <rect x="1.500" y="3.500" width="16" height="11" fill="url(#darkToLight)" stroke={INK} /> },
  ],
];

function Dock() {
  return (
    <aside className="flex w-10 shrink-0 flex-col border-r-2 border-[#949494]">
      <div className="flex h-3 items-center justify-end bg-[#a3a3a3] pr-[6px]">
        <svg width="8" height="6" viewBox="0 0 8 6" fill="none" stroke="#333" strokeWidth="1.200">
          <path d="M3.500.5 1 3l2.500 2.500M7 .5 4.500 3 7 5.500" />
        </svg>
      </div>
      {dock.map((group, i) => (
        <div key={i} className="flex flex-col items-center border-b border-[#949494] pt-[3px] pb-[2px]">
          <Grip className="mb-[3px]" />
          {group.map((d) => (
            <button
              key={d.name}
              aria-label={d.name}
              className={`flex w-[29px] items-center justify-center ${
                d.name === "Color" ? "my-[2px] h-6 rounded-[2px] border border-[#777] bg-[#858585]" : "h-7"
              }`}
            >
              <svg width="18" height="18" viewBox="0 0 18 18">
                {d.art}
              </svg>
            </button>
          ))}
        </div>
      ))}
    </aside>
  );
}

/* ---------- Layers panel ---------- */

function LayersPanel() {
  return (
    <aside className="flex w-[252px] shrink-0 flex-col">
      <div className="flex h-3 items-center justify-end bg-[#a3a3a3] pr-[6px]">
        <svg width="8" height="6" viewBox="0 0 8 6" fill="none" stroke="#333" strokeWidth="1.200">
          <path d="M1 .5 3.500 3 1 5.500M4.500.5 7 3 4.500 5.500" />
        </svg>
      </div>
      <div className="flex h-[27px] border-b border-[#949494] bg-[#a3a3a3] text-[10px] font-medium text-[#484848]">
        <button className="w-[68px] border-r border-[#949494]">Properties</button>
        <button className="-mb-px w-12 border-r border-[#949494] bg-[#b8b8b8] font-bold text-[#1c1c1c]">Layers</button>
        <button className="w-[58px] border-r border-[#949494]">Libraries</button>
        <button aria-label="Panel menu" className="mr-[7px] ml-auto">
          <svg width="10" height="8" viewBox="0 0 10 8" stroke="#444"><path d="M0 .5h10M0 4h10M0 7.500h10" /></svg>
        </button>
      </div>
      <div className="mt-[7px] mr-[6px] ml-[6px] flex-1 border border-[#a6a6a6]">
        <div className="relative flex h-[21px] items-center bg-[#8fa6c2] text-[10px] text-black">
          <button aria-label="Toggle visibility" className="flex h-full w-5 items-center justify-center border-r border-[#9fb0c6]">
            <svg width="12" height="8" viewBox="0 0 12 8">
              <path d="M0 4C3-.8 9-.8 12 4 9 8.800 3 8.800 0 4z" fill="#2b2b2b" />
              <circle cx="6" cy="4" r="2.400" fill="#8fa6c2" />
              <circle cx="6" cy="4" r="1.200" fill="#2b2b2b" />
            </svg>
          </button>
          <div className="ml-[23px] h-[19px] w-[3px] bg-[#4f80ff]" />
          <div className="ml-[26px] h-[18px] w-[18px] border border-black bg-white" />
          <span className="ml-[5px]">Layer 1</span>
          <div className="ml-auto flex h-full w-9 items-center border-l border-[#9fb0c6] pl-[6px]">
            <i className="h-[9px] w-2 rounded-full border border-[#333]" />
          </div>
          <svg width="6" height="6" viewBox="0 0 6 6" className="absolute top-0 right-0">
            <path d="M0 0h6v6z" fill="#222" />
          </svg>
        </div>
      </div>
      <div className="flex h-5 items-center border-b border-[#888] pr-[29px] pl-[6px] text-[10px] text-[#1c1c1c]">
        1 Layer
        <div className="ml-auto flex items-center gap-[14px]">
          <svg width="12" height="12" viewBox="0 0 12 12" fill="none" stroke="#959595"><path d="M6 2.500H.5v9h9V6M6 6l5.500-5.500M7.500.5h4v4" /></svg>
          <svg width="12" height="12" viewBox="0 0 12 12" fill="none" stroke="#959595"><circle cx="4.500" cy="4.500" r="3.800" strokeWidth="1.200" /><path d="m7.500 7.500 4 4" strokeWidth="2" /></svg>
          <svg width="12" height="12" viewBox="0 0 12 12" fill="none" stroke="#959595"><path d="M.5.500h8v8h-8zM3.500 3.500h8v8h-8z" /><path d="M3.500 3.500h5v5h-5z" fill="#959595" /></svg>
          <svg width="15" height="12" viewBox="0 0 15 12" fill="none" stroke="#2b2b2b"><path d="M6.500 2.500h8v9h-8zM8.500 7h4M10.500 5v4M.5 0v4.500H4M2.500 2.500l2 2-2 2" /></svg>
          <svg width="12" height="12" viewBox="0 0 12 12" fill="none" stroke="#2b2b2b"><path d="M.5.500h11v11H.5zM3.500 6h5M6 3.500v5" /></svg>
          <svg width="11" height="12" viewBox="0 0 11 12" fill="none" stroke="#959595"><path d="M0 2.500h11M3.500 2.500v-2h4v2M1.500 2.500v9h8v-9M4 4.500v5M7 4.500v5" /></svg>
        </div>
      </div>
    </aside>
  );
}

/* ---------- Windows taskbar ---------- */

const logoBox = "flex h-[22px] w-[22px] items-center justify-center rounded-[4px] text-[12px] font-bold";

const apps: { name: string; art: React.ReactNode; dot?: string }[] = [
  {
    name: "Start",
    art: (
      <svg width="24" height="24" viewBox="0 0 24 24">
        <defs>
          <linearGradient id="win" x1="0" y1="0" x2="24" y2="24" gradientUnits="userSpaceOnUse">
            <stop offset="0" stopColor="#8be4fb" />
            <stop offset="1" stopColor="#1391f0" />
          </linearGradient>
        </defs>
        <path d="M0 0h11.500v11.500H0zM12.500 0H24v11.500H12.500zM0 12.500h11.500V24H0zM12.500 12.500H24V24H12.500z" fill="url(#win)" />
      </svg>
    ),
  },
  {
    name: "Settings",
    art: (
      <svg width="24" height="24" viewBox="0 0 24 24">
        <path d="M9.500 1h5l.8 3.200 2.400 1.400 3.100-1 2.500 4.300-2.300 2.200v1.800l2.300 2.200-2.500 4.300-3.100-1-2.400 1.400-.8 3.200h-5l-.8-3.200-2.400-1.400-3.100 1L.7 15.100 3 12.900v-1.800L.7 8.900l2.500-4.300 3.100 1 2.400-1.400z" fill="#7d858f" />
        <circle cx="12" cy="12" r="6.200" fill="#e9eef4" />
        <circle cx="12" cy="12" r="4.200" fill="#1a63b8" />
      </svg>
    ),
  },
  {
    name: "Resource Monitor",
    art: (
      <svg width="24" height="20" viewBox="0 0 24 20">
        <rect x=".5" y=".5" width="23" height="19" fill="#e8eef4" stroke="#b9c4cf" />
        <path d="M2 18v-7l3-7 2 11 2-4 2 2 2-6 2 8 2-3 3 4v2z" fill="#8dcaf2" stroke="#3d9ad9" />
      </svg>
    ),
  },
  { name: "InDesign", art: <span className={`${logoBox} bg-[#49021f] text-[#ff3f6c]`}>Id</span> },
  { name: "Illustrator", dot: "w-4 bg-[#d8a0d8]", art: <span className={`${logoBox} bg-[#330000] text-[#ff9a00]`}>Ai</span> },
  { name: "Photoshop", art: <span className={`${logoBox} bg-[#001e36] text-[#31a8ff]`}>Ps</span> },
  {
    name: "Asphalt",
    art: (
      <svg width="24" height="24" viewBox="0 0 24 24">
        <path d="M0 0h24v24H0z" fill="#f4f4f4" />
        <path d="M10 1h4v3l-2 1.500L10 4z" fill="#b02040" />
        <text x="12" y="10" textAnchor="middle" fontSize="4" fontWeight="700">ASPHALT</text>
        <path d="M2 19c0-4 3-7 6-7.500h8c3 .5 6 3.500 6 7.500l-1.500 3h-17z" fill="#2a2a2a" />
        <path d="M8 13h8l1.500 2.500h-11zM3.500 18h4v1.500h-4zM16.500 18h4v1.500h-4z" fill="#ccc" />
      </svg>
    ),
  },
  {
    name: "Amazon Music",
    art: (
      <span className="flex h-6 w-6 flex-col items-center justify-center bg-[#3f14dc] leading-[9px] text-white">
        <span className="text-[6px]">amazon</span>
        <span className="text-[9px]">music</span>
      </span>
    ),
  },
  {
    name: "Signal",
    art: (
      <svg width="22" height="22" viewBox="0 0 22 22">
        <circle cx="11" cy="11" r="10" fill="none" stroke="#3a66f0" strokeWidth="2" strokeDasharray="3 .6" />
        <path d="m1 21 1.500-6 4.500 4.500z" fill="#3a66f0" />
        <circle cx="11" cy="11" r="8" fill="#fff" />
      </svg>
    ),
  },
  {
    name: "Edge",
    art: (
      <svg width="24" height="24" viewBox="0 0 24 24">
        <circle cx="12" cy="12" r="11.800" fill="#1a7fd4" />
        <path d="M.5 10.500C1.500 4 6.500.2 12 .2c7 0 11.800 5 11.800 10.300 0 3.500-2.800 5.500-6 5.500-2.800 0-4-1-3.800-2 .8-.8 1-1.500 1-2.500 0-2.500-2.500-4.500-6-4.500-4 0-7 1.500-8.500 3.500z" fill="#39c6d0" />
        <path d="M17 1.500c4 1.500 6.800 5.500 6.800 9 0 3.500-2.800 5.500-6 5.500-2.800 0-4-1-3.800-2 3-3 3-8.500-1-10.500z" fill="#66e08a" opacity=".75" />
        <path d="M9 22c-4-3.500-4.500-10.500 1-13-5-.5-9.800 2-9.500 4.500C1.500 19 5.500 22.500 9 23.500z" fill="#0b5cad" />
        <path d="M9.500 10.500c-2 4 1 9.500 6.500 9.500 2.500 0 4-.6 6-2-2.500 4-6 5.800-10 5.800-5.500-1-7.500-9.800-2.500-13.300z" fill="#1450a0" />
      </svg>
    ),
  },
  {
    name: "Firefox",
    dot: "w-[6px] bg-[#9a9a9a]",
    art: (
      <svg width="24" height="24" viewBox="0 0 24 24">
        <defs>
          <linearGradient id="ff" x1="0" y1="0" x2="0" y2="1">
            <stop offset="0" stopColor="#ffd23f" />
            <stop offset=".5" stopColor="#ff7a1a" />
            <stop offset="1" stopColor="#f0245c" />
          </linearGradient>
        </defs>
        <path d="M13 0c2.500 2 4 3.500 4.500 5.500.8-.3 1-1 .8-2 3.500 2.500 5.200 6 5.200 9.500C23.500 19 18.500 24 12 24S.5 19 .5 13c0-3.500 1-6 3-8.500l.6 2.800C5 5.600 6 5 7.500 4.300 7.200 5.600 8 6.500 9.500 6.500 10.500 4.500 12 2.500 13 0z" fill="url(#ff)" />
        <circle cx="12" cy="13.500" r="6" fill="#8a4af0" />
        <path d="M6 11c2-2 4-.5 6-.5-1 1-2 2-3.500 2 .5 3 4.500 3.500 6.500 1.500 0 4-5 6-8 3.500C5 15.500 5 13 6 11z" fill="#ff9a2a" />
      </svg>
    ),
  },
  {
    name: "Outlook",
    art: (
      <svg width="24" height="24" viewBox="0 0 24 24">
        <path d="M7 1h15v13H7z" fill="#1a86d8" />
        <path d="M14.500 1H22v6.500h-7.500z" fill="#50c4f5" />
        <path d="M6 12l18 0v11H6z" fill="#1668b8" />
        <path d="M24 12 6 23h18z" fill="#3fb0ee" />
        <rect y="5" width="13" height="13" rx="1" fill="#0f5fb4" />
        <ellipse cx="6.500" cy="11.500" rx="2.800" ry="3.300" fill="none" stroke="#fff" strokeWidth="1.800" />
      </svg>
    ),
  },
  {
    name: "Mail",
    art: (
      <svg width="24" height="24" viewBox="0 0 24 24">
        <path d="M0 10 12 1l12 9v14H0z" fill="#1565c0" />
        <path d="M2 11h20l-10 8z" fill="#f4f8fc" />
        <path d="M0 11l12 8 12-8v13H0z" fill="#2f9bea" />
        <path d="m0 24 24-13v13z" fill="#55b8f6" />
      </svg>
    ),
  },
  {
    name: "Sticky Notes",
    art: (
      <svg width="22" height="22" viewBox="0 0 22 22">
        <path d="M0 0h22v11L12 22H0z" fill="#fcd116" />
        <path d="M22 11v11H12z" fill="#fcd116" opacity=".25" />
        <path d="M12 11h10L12 22z" fill="#4a4a4a" />
      </svg>
    ),
  },
  {
    name: "Notepad",
    art: (
      <svg width="20" height="24" viewBox="0 0 20 24">
        <rect y="2" width="19" height="20" fill="#55bfdc" />
        <path d="M2.500 0v4M6 0v4M9.500 0v4M13 0v4M16.500 0v4" stroke="#d8f1f8" strokeWidth="1.500" />
        <path d="M4 8h11M4 12h11M4 16h11" stroke="#155f7a" strokeWidth="1.500" />
        <path d="M0 21h19v2.500H0z" fill="#f0e6da" />
        <path d="M0 22.500h19V24H0z" fill="#b8562a" />
      </svg>
    ),
  },
  {
    name: "File Explorer",
    dot: "w-[6px] bg-[#9a9a9a]",
    art: (
      <svg width="24" height="24" viewBox="0 0 24 24">
        <path d="M0 2.500C0 1.500.5 1 1.500 1H8l2.500 3v5H0z" fill="#e8a020" />
        <path d="M0 6h10l2-2h10.500c1 0 1.500.5 1.500 1.500V22H0z" fill="#fcd462" />
        <path d="M5 23v-5.500c0-1.500.8-2.500 2.500-2.500h9c1.700 0 2.500 1 2.500 2.500V23z" fill="#2a82d8" />
        <path d="M8 23v-3.500h8V23z" fill="#1560a8" />
      </svg>
    ),
  },
  {
    name: "VLC",
    dot: "w-[6px] bg-[#9a9a9a]",
    art: (
      <svg width="22" height="24" viewBox="0 0 22 24">
        <path d="M2.500 17h17l2 6.500H.5z" fill="#f08010" />
        <path d="M9.500 1h3L17 18c-2 2.500-10 2.500-12 0z" fill="#f58a1a" />
        <path d="m8.500 5-1.200 4.500c2 1.200 5.400 1.200 7.400 0L13.500 5c-1.300.8-3.700.8-5 0zM6.600 12l-1.100 4c3 2.200 8 2.200 11 0l-1.100-4c-2.500 1.600-6.300 1.600-8.800 0z" fill="#f4f4f4" />
      </svg>
    ),
  },
];

function Taskbar() {
  return (
    <footer className="grid h-12 shrink-0 grid-cols-[1fr_auto_1fr] items-center bg-[#202020] text-white">
      <div />
      <div className="flex gap-1">
        {apps.map((a) => (
          <button
            key={a.name}
            aria-label={a.name}
            className={`relative flex h-10 w-10 items-center justify-center rounded-[4px] ${
              a.name === "Illustrator" ? "border border-[#3a3a3a] bg-[#2e2e2e]" : ""
            }`}
          >
            {a.art}
            {a.dot && <i className={`absolute bottom-[1px] left-1/2 h-[3px] -translate-x-1/2 rounded-full ${a.dot}`} />}
          </button>
        ))}
      </div>
      <div className="flex items-center justify-end pr-5">
        <svg width="13" height="8" viewBox="0 0 13 8" fill="none" stroke="#fff" strokeWidth="1.300"><path d="m1 7 5.500-5.500L12 7" /></svg>
        <svg width="16" height="17" viewBox="0 0 16 17" className="ml-[10px]">
          <path d="M7.500 0c2 1.500 4.500 2 7 2v6c0 4-3 7-7 8.500C3.500 15 .5 12 .5 8V2c2.500 0 5-.5 7-2z" fill="#2a9be8" />
          <path d="M7.500 0v8H.5V2c2.500 0 5-.5 7-2zM7.500 8h7c0 4-3 7-7 8.500z" fill="#58bdf5" />
          <circle cx="11" cy="12" r="4.800" fill="#1a8a2c" />
          <path d="m8.800 12 1.600 1.600 2.800-3" fill="none" stroke="#fff" strokeWidth="1.200" />
        </svg>
        <div className="ml-[14px] text-center text-[12px] leading-4">
          ENG
          <br />
          IN
        </div>
        <svg width="17" height="13" viewBox="0 0 17 13" className="ml-[18px]" fill="none" stroke="#fff" strokeWidth="1.300">
          <path d="M1 4.500a10.500 10.500 0 0 1 15 0M3.300 7a7.300 7.300 0 0 1 10.400 0M5.500 9.300a4.300 4.300 0 0 1 6 0" />
          <circle cx="8.500" cy="11.300" r="1.300" fill="#fff" stroke="none" />
        </svg>
        <svg width="17" height="14" viewBox="0 0 17 14" className="ml-[7px]" fill="none" stroke="#fff" strokeWidth="1.200">
          <path d="M1 5v4h2.500L7 12.500v-11L3.500 5zM9.500 5a3 3 0 0 1 0 4M11.500 3a6 6 0 0 1 0 8M13.500 1a9 9 0 0 1 0 12" />
        </svg>
        <svg width="16" height="14" viewBox="0 0 16 14" className="ml-[7px]">
          <rect x="1.500" y="4" width="12" height="8.500" rx="1.500" fill="none" stroke="#fff" strokeWidth="1.300" />
          <path d="M3 5.500h9v5.500H3zM14 6.500h1.700v3.500H14z" fill="#fff" />
          <path d="M3.500 0 .5 5h2L1.500 8l4-4.500h-2z" fill="#fff" stroke="#202020" strokeWidth=".6" />
        </svg>
        <div className="ml-[14px] text-right text-[12px] leading-4">
          17:16
          <br />
          13-10-2022
        </div>
        <svg width="15" height="15" viewBox="0 0 15 15" className="ml-2" fill="none" stroke="#fff" strokeWidth="1.200">
          <path d="M7 1.500C4 1.500 2.500 3.500 2.500 6v3.500L1 12h12l-1.500-2.500V8.500M5.300 12.500c.5 1.800 2.900 1.800 3.400 0" />
          <path d="M5.500 5.500h3l-3 3.500h3M10 .8h3.500L10 5h3.500" />
        </svg>
      </div>
    </footer>
  );
}

export default function App() {
  return (
    <div className="relative flex h-screen flex-col overflow-hidden bg-[#b8b8b8] font-['Roboto','Liberation_Sans',sans-serif]">
      <MenuBar />
      <ControlBar />
      <div className="relative flex min-h-0 flex-1">
        <ToolsPanel />
        <DocumentWindow />
        <Dock />
        <LayersPanel />
        <ColorPanel />
      </div>
      <Taskbar />
    </div>
  );
}
